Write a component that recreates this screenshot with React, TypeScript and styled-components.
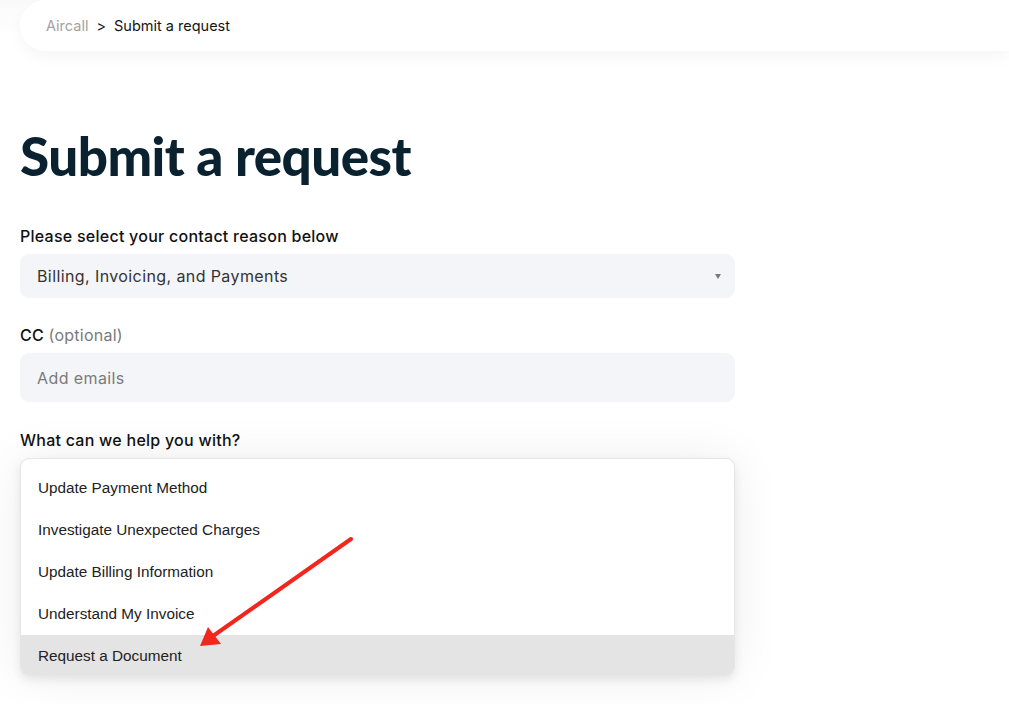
import React from "react";
import styled, { createGlobalStyle } from "styled-components";

const Global = createGlobalStyle`
  html, body { margin: 0; padding: 0; background: #fff; }
  body { font-family: "Inter", "Lato", sans-serif; color: #111; overflow: hidden; }
  * { box-sizing: border-box; }
`;

const Page = styled.div`
  width: 1009px;
  height: 704px;
  position: relative;
  overflow: hidden;
  background: #fff;
`;

const TopBand = styled.div`
  padding-left: 20px;
  background: linear-gradient(#f9f9f9 0px, #fcfcfc 10px, #fdfdfd 30px, #fff 34px);
`;

const Crumbs = styled.nav`
  height: 51px;
  display: flex;
  align-items: center;
  gap: 8px;
  padding-left: 26px;
  background: #fff;
  border-radius: 26px 0 0 26px;
  box-shadow: 0 6px 16px rgba(0, 0, 0, 0.04);
  font-size: 14.5px;
`;

const Crumb = styled.span<{ $muted?: boolean }>`
  color: ${(p) => (p.$muted ? "#a3a3a3" : "#151515")};
`;

const Main = styled.main`
  padding: 73px 0 0 20px;
  width: 735px;
`;

const Title = styled.h1`
  margin: 0 0 38px;
  font-family: "Lato", sans-serif;
  font-weight: 900;
  font-size: 53px;
  line-height: 64px;
  letter-spacing: -0.55px;
  color: #0a2230;
`;

const Field = styled.div<{ $gap: number }>`
  position: relative;
  margin-bottom: ${(p) => p.$gap}px;
`;

const Label = styled.div`
  font-size: 16px;
  font-weight: 500;
  line-height: 20px;
  letter-spacing: 0.25px;
  margin-bottom: 8px;
  color: #111;
`;

const Optional = styled.span`
  color: #7a7a7a;
  font-weight: 400;
`;

const Box = styled.div<{ $h: number; $muted?: boolean }>`
  height: ${(p) => p.$h}px;
  background: #f4f5f8;
  border-radius: 9px;
  display: flex;
  align-items: center;
  justify-content: space-between;
  padding: 0 14px 0 17px;
  font-size: 16px;
  letter-spacing: 0.4px;
  color: ${(p) => (p.$muted ? "#7a7a7a" : "#333")};
`;

const Caret = styled.span`
  width: 0;
  height: 0;
  margin-left: auto;
  border-left: 3.5px solid transparent;
  border-right: 3.5px solid transparent;
  border-top: 5px solid #7a7a7a;
`;

const Menu = styled.ul`
  position: absolute;
  left: 0;
  top: 28px;
  width: 715px;
  height: 218px;
  margin: 0;
  padding: 8px 0 0;
  list-style: none;
  background: #fff;
  border: 1px solid #e6e6e6;
  border-radius: 9px;
  overflow: hidden;
  box-shadow: 0 4px 10px rgba(0, 0, 0, 0.08), 0 0 50px rgba(0, 0, 0, 0.07);
  font-family: "Liberation Sans", Arial, sans-serif;
  z-index: 2;
`;

const Option = styled.li<{ $active?: boolean }>`
  height: 42px;
  flex-shrink: 0;
  display: flex;
  align-items: center;
  padding-left: 17px;
  font-size: 15.3px;
  color: #222;
  background: ${(p) => (p.$active ? "#e4e4e4" : "transparent")};
`;

const Annotation = styled.svg`
  position: absolute;
  left: 0;
  top: 0;
  pointer-events: none;
  z-index: 3;
`;

const options = [
  "Update Payment Method",
  "Investigate Unexpected Charges",
  "Update Billing Information",
  "Understand My Invoice",
  "Request a Document",
];

export default function App() {
  return (
    <Page>
      <Global />
      <TopBand>
        <Crumbs>
          <Crumb $muted>Aircall</Crumb>
          <Crumb>&gt;</Crumb>
          <Crumb>Submit a request</Crumb>
        </Crumbs>
      </TopBand>
      <Main>
        <Title>Submit a request</Title>
        <Field $gap={27}>
          <Label>Please select your contact reason below</Label>
          <Box $h={44}>
            <span>Billing, Invoicing, and Payments</span>
            <Caret />
          </Box>
        </Field>
        <Field $gap={28}>
          <Label>
            CC <Optional>(optional)</Optional>
          </Label>
          <Box $h={49} $muted>
            Add emails
          </Box>
        </Field>
        <Field $gap={0}>
          <Label>What can we help you with?</Label>
          <Box $h={44}>
            <Caret />
          </Box>
          <Menu>
            {options.map((o, i) => (
              <Option key={o} $active={i === options.length - 1}>
                {o}
              </Option>
            ))}
          </Menu>
        </Field>
      </Main>
      <Annotation width="1009" height="704" viewBox="0 0 1009 704">
        <line x1="351" y1="539" x2="213" y2="636" stroke="#f2261c" strokeWidth="4" strokeLinecap="round" />
        <polygon points="200,646 208,627 221,644" fill="#f2261c" />
      </Annotation>
    </Page>
  );
}
